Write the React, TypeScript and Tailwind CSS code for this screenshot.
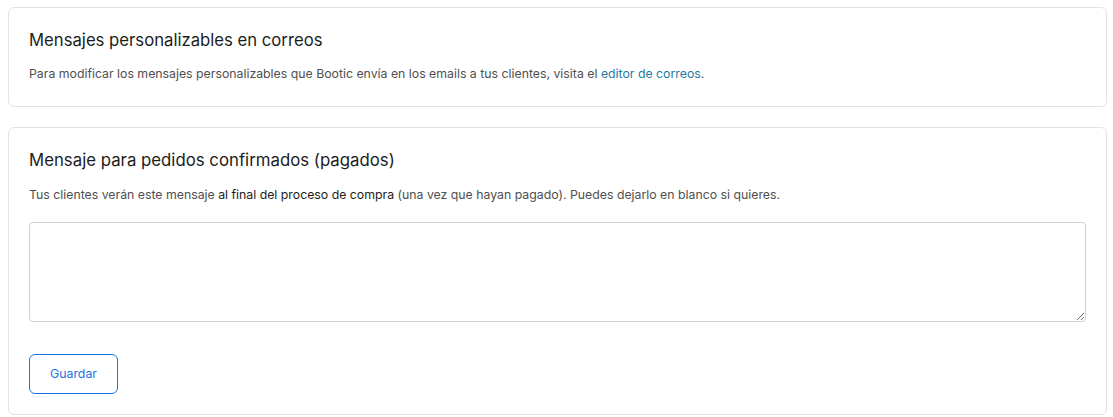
export default function App() {
  return (
    <div className="min-h-screen bg-white pl-2 pr-[6px] pt-[7px] font-['Inter',sans-serif]">
      {/* Card: mensajes en correos */}
      <section className="rounded-md border border-[#e3e3e3] bg-white px-5 pt-[20px] pb-[22px]">
        <h2 className="text-[16.7px] leading-6 text-[#1c1c1c]">Mensajes personalizables en correos</h2>
        <p className="mt-3 text-[12.3px] leading-5 text-[#4f4f4f]">
          Para modificar los mensajes personalizables que Bootic envía en los emails a tus clientes, visita el{' '}
          <a href="#" className="text-[#1f7aa3]">editor de correos</a>.
        </p>
      </section>

      {/* Card: pedidos confirmados */}
      <section className="mt-5 rounded-md border border-[#e3e3e3] bg-white px-5 pt-[20px] pb-[20px]">
        <h2 className="text-[16.8px] leading-6 text-[#1c1c1c]">Mensaje para pedidos confirmados (pagados)</h2>
        <p className="mt-[13px] text-[12.3px] leading-5 text-[#4f4f4f]">
          Tus clientes verán este mensaje <span className="text-[#1c1c1c]">al final del proceso de compra</span> (una vez que hayan pagado). Puedes dejarlo en blanco si quieres.
        </p>
        <textarea className="mt-[17px] block h-[100px] w-full rounded-[4px] border border-[#cfcfcf] bg-white p-2 text-sm outline-none" />
        <button className="mt-[32px] h-10 w-[89px] rounded-md border border-[#1a73e8] bg-white text-[12.3px] text-[#1a73e8]">
          Guardar
        </button>
      </section>
    </div>
  )
}
